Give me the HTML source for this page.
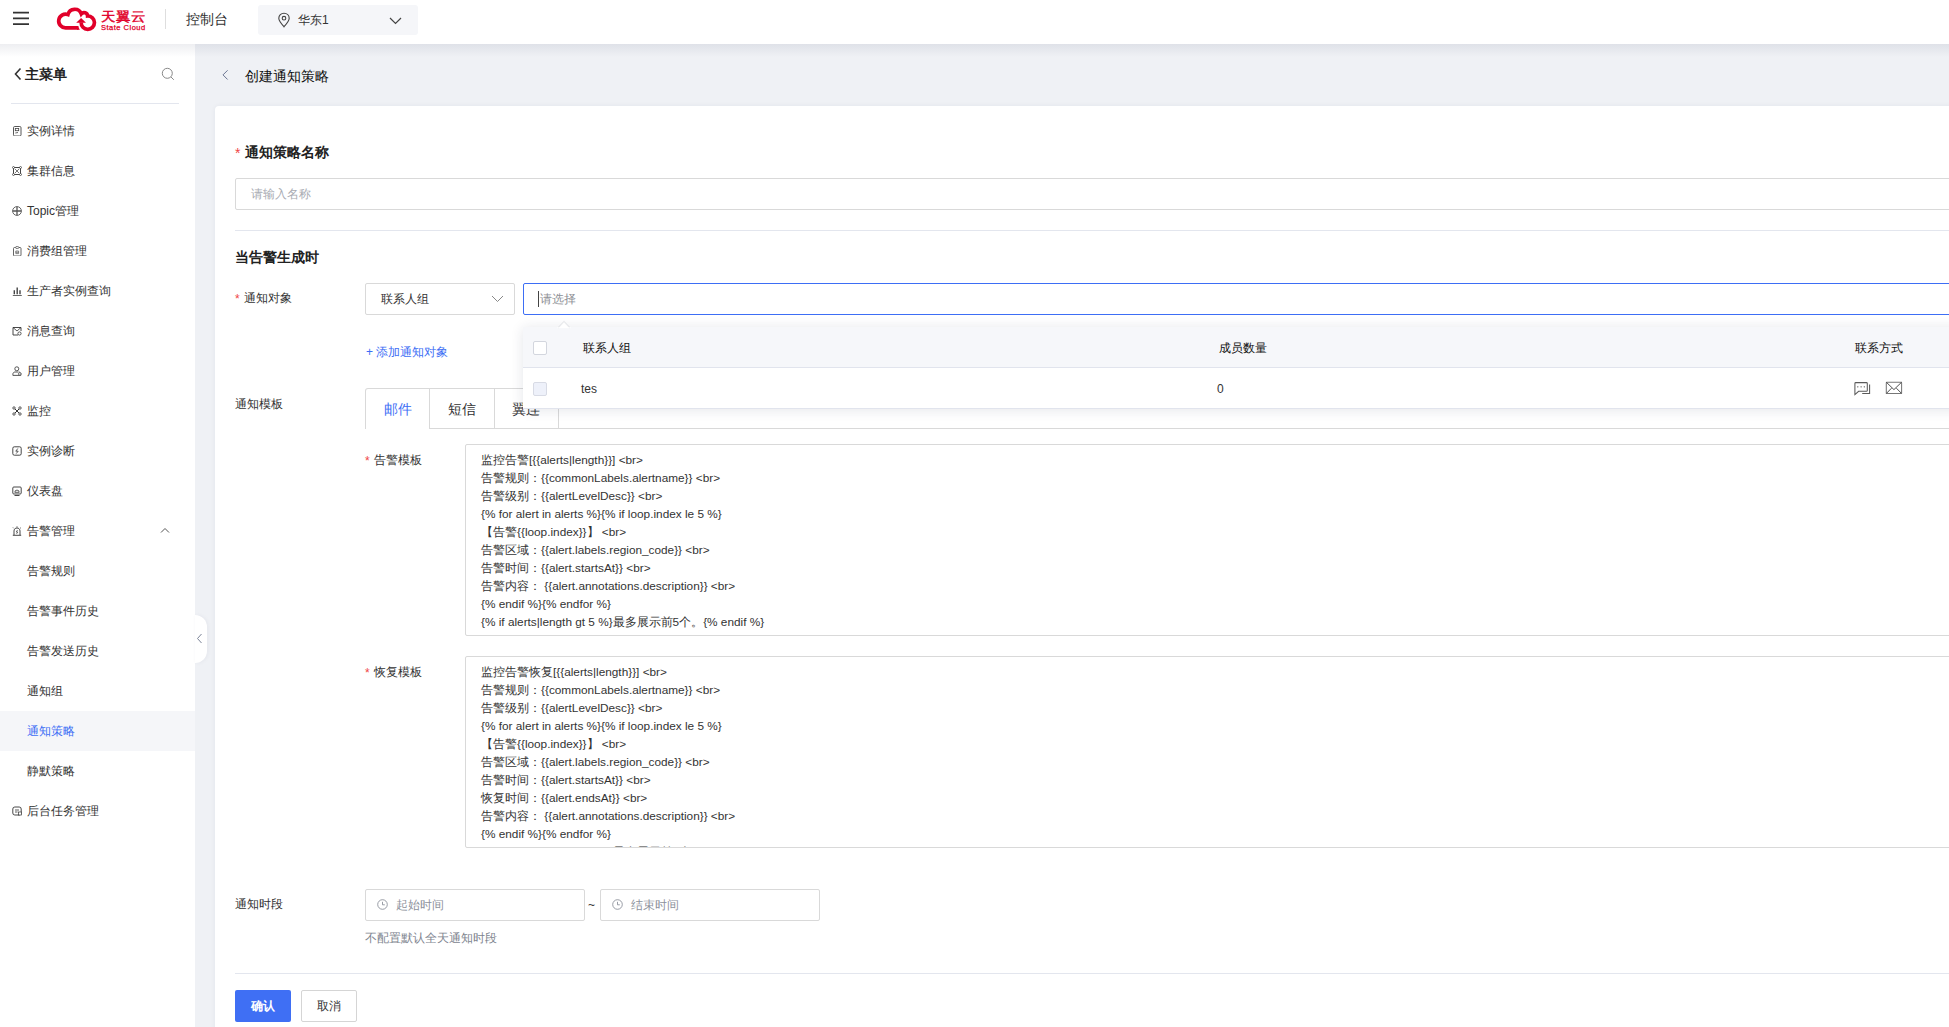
<!DOCTYPE html>
<html><head><meta charset="utf-8">
<style>
*{box-sizing:border-box;margin:0;padding:0}
html,body{width:1949px;height:1027px;overflow:hidden;background:#eff1f5;font-family:"Liberation Sans",sans-serif;color:#222;font-size:12px}
.abs{position:absolute}
.t{position:absolute;white-space:nowrap;line-height:1}
#hdr{position:absolute;left:0;top:0;width:1949px;height:44px;background:#fff;z-index:5}
#hshadow{position:absolute;left:0;top:44px;width:1949px;height:13px;background:linear-gradient(rgba(20,30,70,0.075),rgba(20,30,70,0));z-index:4}
#side{position:absolute;left:0;top:0;width:195px;height:1027px;background:#fff;z-index:3}
#card{position:absolute;left:215px;top:106px;width:1760px;height:950px;background:#fff;border-radius:4px;box-shadow:0 0 5px rgba(40,50,80,0.06)}
.mi{position:absolute;left:0;width:195px;height:40px}
.mi .ic{position:absolute;left:12px;top:16px;width:10px;height:10px}
.mi .tx{position:absolute;left:27px;top:15px;font-size:12px;line-height:12px;color:#333;white-space:nowrap}
.inp{position:absolute;border:1px solid #d9d9d9;border-radius:2px;background:#fff}
.lbl{position:absolute;font-size:12px;line-height:12px;color:#333;white-space:nowrap}
.req{color:#f04545}
.ta{position:absolute;border:1px solid #d9d9d9;border-radius:2px;background:#fff;overflow:hidden}
.ta .ln{position:absolute;left:15px;font-size:11.8px;line-height:12px;color:#333;white-space:nowrap}
</style></head>
<body>
<!-- HEADER -->
<div id="hdr">
  <svg class="abs" style="left:12px;top:8px" width="18" height="20" viewBox="0 0 18 20"><path d="M1 4.7 H17 M1 10.4 H17 M1 16.1 H17" stroke="#333" stroke-width="1.7"/></svg>
  <svg class="abs" style="left:52px;top:3px" width="50" height="32" viewBox="0 0 50 32">
    <path d="M26.5 24.9 H13.8 A6.9 6.9 0 1 1 15.9 11.5 A7.03 7.03 0 0 1 29.3 10.9 A3.55 3.55 0 0 1 35.6 13.0 A6.65 6.65 0 1 1 29.15 19.4" fill="none" stroke="#e1002a" stroke-width="3.7"/>
    <path d="M29.1 14.9 L34 19.7 L24.2 19.7 Z" fill="#e1002a"/><path d="M25 23.05 H25.6 L27.9 26.75 H25 Z" fill="#e1002a"/>
  </svg>
  <div class="t" style="left:101px;top:10px;font-size:14.6px;font-weight:normal;color:#e1002a;-webkit-text-stroke:0.45px #e1002a;transform:scaleY(0.9);transform-origin:0 0">天翼云</div>
  <div class="t" style="left:101px;top:24px;font-size:7.5px;font-weight:normal;color:#e1002a;letter-spacing:0.5px;-webkit-text-stroke:0.25px #e1002a">State Cloud</div>
  <div class="abs" style="left:165px;top:9px;width:1px;height:20px;background:#dedede"></div>
  <div class="t" style="left:186px;top:12px;font-size:14px;color:#333">控制台</div>
  <div class="abs" style="left:258px;top:5px;width:160px;height:30px;background:#f5f6f9;border-radius:3px"></div>
  <svg class="abs" style="left:277px;top:12px" width="14" height="16" viewBox="0 0 14 16">
    <path d="M7 14.8 C4.5 12 1.8 9 1.8 6.3 C1.8 3.3 4.1 1.2 7 1.2 C9.9 1.2 12.2 3.3 12.2 6.3 C12.2 9 9.5 12 7 14.8 Z" fill="none" stroke="#444" stroke-width="1.1"/>
    <circle cx="7" cy="6.2" r="1.8" fill="none" stroke="#444" stroke-width="1.1"/>
  </svg>
  <div class="t" style="left:298px;top:14px;font-size:12px;color:#333">华东1</div>
  <svg class="abs" style="left:389px;top:17px" width="13" height="8" viewBox="0 0 13 8">
    <path d="M1 1 L6.5 6.5 L12 1" fill="none" stroke="#444" stroke-width="1.2"/>
  </svg>
</div>
<div id="hshadow"></div>

<!-- SIDEBAR -->
<div id="side">
  <svg class="abs" style="left:13px;top:67px" width="10" height="14" viewBox="0 0 10 14"><path d="M7.5 1.5 L2.5 7 L7.5 12.5" fill="none" stroke="#333" stroke-width="1.6"/></svg>
  <div class="t" style="left:25px;top:67px;font-size:14px;font-weight:bold;color:#222">主菜单</div>
  <svg class="abs" style="left:161px;top:67px" width="14" height="14" viewBox="0 0 14 14"><circle cx="6.3" cy="6.3" r="5" fill="none" stroke="#888" stroke-width="1"/><path d="M10 10 L12.8 12.8" stroke="#888" stroke-width="1"/></svg>
  <div class="abs" style="left:11px;top:103px;width:168px;height:1px;background:#e3e6ee"></div>
  <div class="mi" style="top:110px"><svg class="ic" width="10" height="10" viewBox="0 0 10 10"><rect x="1.5" y="0.5" width="7.5" height="9.5" rx="1.2" fill="none" stroke="#444" stroke-width="0.9"/><rect x="3.3" y="2.5" width="3.4" height="2.2" fill="none" stroke="#444" stroke-width="0.8"/><path d="M3.3 7 L6 6.5" stroke="#444" stroke-width="0.8"/></svg><div class="tx">实例详情</div></div>
  <div class="mi" style="top:150px"><svg class="ic" width="10" height="10" viewBox="0 0 10 10"><rect x="1.5" y="1.5" width="7" height="7" fill="none" stroke="#333" stroke-width="0.9"/><circle cx="1.5" cy="1.5" r="1" fill="#fff" stroke="#333" stroke-width="0.7"/><circle cx="8.5" cy="1.5" r="1" fill="#fff" stroke="#333" stroke-width="0.7"/><circle cx="1.5" cy="8.5" r="1" fill="#fff" stroke="#333" stroke-width="0.7"/><circle cx="8.5" cy="8.5" r="1" fill="#fff" stroke="#333" stroke-width="0.7"/><path d="M3 3 L7 7 M7 3 L3 7" stroke="#555" stroke-width="0.8"/></svg><div class="tx">集群信息</div></div>
  <div class="mi" style="top:190px"><svg class="ic" width="10" height="10" viewBox="0 0 10 10"><circle cx="5" cy="5" r="4.4" fill="none" stroke="#555" stroke-width="0.9"/><path d="M5 0.8 V9.2 M0.8 5 H9.2" stroke="#555" stroke-width="1.3"/></svg><div class="tx">Topic管理</div></div>
  <div class="mi" style="top:230px"><svg class="ic" width="10" height="10" viewBox="0 0 10 10"><rect x="1.5" y="1.5" width="7.5" height="8.5" rx="1" fill="none" stroke="#555" stroke-width="0.9"/><ellipse cx="5.2" cy="1.5" rx="1.8" ry="1" fill="#fff" stroke="#555" stroke-width="0.8"/><path d="M3.8 5 H6.6 V7.6 H3.8 Z M3.8 6.3 H6.6" fill="none" stroke="#555" stroke-width="0.7"/></svg><div class="tx">消费组管理</div></div>
  <div class="mi" style="top:270px"><svg class="ic" width="10" height="10" viewBox="0 0 10 10"><path d="M0.8 9.6 H9.8" stroke="#444" stroke-width="0.9"/><path d="M2.3 8.3 V4.3 M5.2 8.3 V1.6 M8 8.3 V4.3" stroke="#444" stroke-width="1.4"/></svg><div class="tx">生产者实例查询</div></div>
  <div class="mi" style="top:310px"><svg class="ic" width="10" height="10" viewBox="0 0 10 10"><path d="M6 9 H1 V1.5 H9 V5" fill="none" stroke="#333" stroke-width="0.9"/><path d="M1 1.5 L5 5 L9 1.5" fill="none" stroke="#333" stroke-width="0.8"/><circle cx="7.5" cy="7.5" r="1.6" fill="none" stroke="#333" stroke-width="0.8"/></svg><div class="tx">消息查询</div></div>
  <div class="mi" style="top:350px"><svg class="ic" width="10" height="10" viewBox="0 0 10 10"><circle cx="4.8" cy="2.8" r="2" fill="none" stroke="#444" stroke-width="0.9"/><path d="M6.3 6 H3 C1.8 6 0.9 6.9 0.9 8.1 V9.4 H8.8 V8.1 C8.8 6.9 7.9 6 6.7 6" fill="none" stroke="#444" stroke-width="0.9"/><circle cx="7.8" cy="7.9" r="1.3" fill="#fff" stroke="#444" stroke-width="0.8"/></svg><div class="tx">用户管理</div></div>
  <div class="mi" style="top:390px"><svg class="ic" width="10" height="10" viewBox="0 0 10 10"><circle cx="2" cy="2" r="1.2" fill="none" stroke="#333" stroke-width="0.8"/><circle cx="8" cy="2" r="1.2" fill="none" stroke="#333" stroke-width="0.8"/><circle cx="2" cy="8" r="1.2" fill="none" stroke="#333" stroke-width="0.8"/><circle cx="8" cy="8" r="1.2" fill="none" stroke="#333" stroke-width="0.8"/><path d="M3 3 L7 7 M7 3 L3 7" stroke="#333" stroke-width="1"/></svg><div class="tx">监控</div></div>
  <div class="mi" style="top:430px"><svg class="ic" width="10" height="10" viewBox="0 0 10 10"><rect x="0.8" y="0.8" width="8.4" height="8.4" rx="1.5" fill="none" stroke="#333" stroke-width="0.9"/><path d="M5.8 2.5 L3.8 5.2 H6.2 L4.2 7.6" fill="none" stroke="#333" stroke-width="0.8"/></svg><div class="tx">实例诊断</div></div>
  <div class="mi" style="top:470px"><svg class="ic" width="10" height="10" viewBox="0 0 10 10"><rect x="0.8" y="1" width="8.4" height="7" rx="1" fill="none" stroke="#333" stroke-width="0.9"/><path d="M2.8 6.3 A2.2 2.2 0 0 1 7.2 6.3 Z" fill="none" stroke="#333" stroke-width="0.8"/><path d="M2.5 9.5 H7.5" stroke="#333" stroke-width="0.9"/></svg><div class="tx">仪表盘</div></div>
  <div class="mi" style="top:510px"><svg class="ic" width="10" height="10" viewBox="0 0 10 10"><path d="M2 9 V5 C2 3.2 3.3 2 5 2 C6.7 2 8 3.2 8 5 V9" fill="none" stroke="#333" stroke-width="0.9"/><path d="M0.8 9.3 H9.2" stroke="#333" stroke-width="0.9"/><path d="M5 0.3 V1.5 M1 1.5 L1.8 2.3 M9 1.5 L8.2 2.3" stroke="#333" stroke-width="0.8"/><path d="M5.5 4 L4.3 6 H5.7 L4.6 7.8" fill="none" stroke="#333" stroke-width="0.7"/></svg><div class="tx">告警管理</div><svg class="abs" style="left:160px;top:17px" width="10" height="6" viewBox="0 0 10 6"><path d="M1 5.5 L5 1.5 L9 5.5" fill="none" stroke="#555" stroke-width="1"/></svg></div>
  <div class="mi" style="top:550px"><div class="tx">告警规则</div></div>
  <div class="mi" style="top:590px"><div class="tx">告警事件历史</div></div>
  <div class="mi" style="top:630px"><div class="tx">告警发送历史</div></div>
  <div class="mi" style="top:670px"><div class="tx">通知组</div></div>
  <div class="mi" style="top:710px"><div class="abs" style="left:0;top:1px;width:195px;height:40px;background:#f5f6f9"></div><div class="tx" style="color:#3d6ef5">通知策略</div></div>
  <div class="mi" style="top:750px"><div class="tx">静默策略</div></div>
  <div class="mi" style="top:790px"><svg class="ic" width="10" height="10" viewBox="0 0 10 10"><rect x="0.8" y="1" width="8.4" height="8" rx="2" fill="none" stroke="#333" stroke-width="0.9"/><path d="M3 4 H7 M3 6 H5.5" stroke="#333" stroke-width="0.8"/><rect x="6.5" y="6" width="3" height="3" fill="#fff" stroke="#333" stroke-width="0.7"/></svg><div class="tx">后台任务管理</div></div>
</div>
<div class="abs" style="left:195px;top:615px;width:12px;height:48px;background:#fff;border-radius:0 12px 12px 0;box-shadow:1px 0 4px rgba(30,40,70,0.05);z-index:3"></div>
<svg class="abs" style="left:196px;top:633px;z-index:3" width="7" height="11" viewBox="0 0 7 11"><path d="M5.5 1 L1.5 5.5 L5.5 10" fill="none" stroke="#7d8599" stroke-width="1"/></svg>

<!-- MAIN -->
<svg class="abs" style="left:221px;top:69px" width="9" height="12" viewBox="0 0 9 12"><path d="M6.6 1.3 L2 5.9 L6.6 10.5" fill="none" stroke="#6b7592" stroke-width="1"/></svg>
<div class="t" style="left:245px;top:69px;font-size:14px;font-weight:500;color:#111">创建通知策略</div>
<div id="card"></div>

<!-- FORM -->
<div class="t" style="left:235px;top:146px;font-size:14px;color:#f04545">*</div>
<div class="t" style="left:245px;top:145px;font-size:14px;font-weight:bold;color:#222">通知策略名称</div>
<div class="inp" style="left:235px;top:178px;width:1750px;height:32px"></div>
<div class="t" style="left:251px;top:188px;font-size:12px;color:#a8abb3">请输入名称</div>
<div class="abs" style="left:235px;top:230px;width:1750px;height:1px;background:#e3e6ee"></div>
<div class="t" style="left:235px;top:250px;font-size:14px;font-weight:bold;color:#222">当告警生成时</div>

<div class="t" style="left:235px;top:293px;font-size:12px;color:#f04545">*</div>
<div class="t" style="left:244px;top:292px;font-size:12px;color:#333">通知对象</div>
<div class="inp" style="left:365px;top:283px;width:150px;height:32px"></div>
<div class="t" style="left:381px;top:293px;font-size:12px;color:#333">联系人组</div>
<svg class="abs" style="left:491px;top:295px" width="13" height="8" viewBox="0 0 13 8"><path d="M1 1 L6.5 6.5 L12 1" fill="none" stroke="#888" stroke-width="1"/></svg>
<div class="inp" style="left:523px;top:283px;width:1500px;height:32px;border-color:#3d6ef5"></div>
<div class="abs" style="left:538px;top:291px;width:1px;height:16px;background:#444"></div>
<div class="t" style="left:540px;top:293px;font-size:12px;color:#8e9096">请选择</div>

<div class="t" style="left:366px;top:346px;font-size:12px;color:#3d6ef5">+ 添加通知对象</div>
<div class="t" style="left:235px;top:398px;font-size:12px;color:#333">通知模板</div>

<!-- tabs -->
<div class="abs" style="left:365px;top:388px;width:65px;height:41px;border:1px solid #d9d9d9;border-bottom:none;border-radius:3px 0 0 0"></div>
<div class="abs" style="left:429px;top:388px;width:66px;height:41px;border:1px solid #d9d9d9;border-left:none"></div>
<div class="abs" style="left:494px;top:388px;width:65px;height:41px;border:1px solid #d9d9d9;border-left:none"></div>
<div class="abs" style="left:558px;top:428px;width:1400px;height:1px;background:#d9d9d9"></div>
<div class="t" style="left:384px;top:402px;font-size:14px;color:#3d6ef5">邮件</div>
<div class="t" style="left:448px;top:402px;font-size:14px;color:#333">短信</div>
<div class="t" style="left:512px;top:402px;font-size:14px;color:#333">翼连</div>

<div class="t" style="left:365px;top:455px;font-size:12px;color:#f04545">*</div>
<div class="t" style="left:374px;top:454px;font-size:12px;color:#333">告警模板</div>
<div class="ta" style="left:465px;top:444px;width:1500px;height:192px"><div class="ln" style="top:9px">监控告警[{{alerts|length}}] &lt;br&gt;</div><div class="ln" style="top:27px">告警规则：{{commonLabels.alertname}} &lt;br&gt;</div><div class="ln" style="top:45px">告警级别：{{alertLevelDesc}} &lt;br&gt;</div><div class="ln" style="top:63px">{% for alert in alerts %}{% if loop.index le 5 %}</div><div class="ln" style="top:81px">【告警{{loop.index}}】 &lt;br&gt;</div><div class="ln" style="top:99px">告警区域：{{alert.labels.region_code}} &lt;br&gt;</div><div class="ln" style="top:117px">告警时间：{{alert.startsAt}} &lt;br&gt;</div><div class="ln" style="top:135px">告警内容： {{alert.annotations.description}} &lt;br&gt;</div><div class="ln" style="top:153px">{% endif %}{% endfor %}</div><div class="ln" style="top:171px">{% if alerts|length gt 5 %}最多展示前5个。{% endif %}</div></div>
<div class="t" style="left:365px;top:667px;font-size:12px;color:#f04545">*</div>
<div class="t" style="left:374px;top:666px;font-size:12px;color:#333">恢复模板</div>
<div class="ta" style="left:465px;top:656px;width:1500px;height:192px"><div class="ln" style="top:9px">监控告警恢复[{{alerts|length}}] &lt;br&gt;</div><div class="ln" style="top:27px">告警规则：{{commonLabels.alertname}} &lt;br&gt;</div><div class="ln" style="top:45px">告警级别：{{alertLevelDesc}} &lt;br&gt;</div><div class="ln" style="top:63px">{% for alert in alerts %}{% if loop.index le 5 %}</div><div class="ln" style="top:81px">【告警{{loop.index}}】 &lt;br&gt;</div><div class="ln" style="top:99px">告警区域：{{alert.labels.region_code}} &lt;br&gt;</div><div class="ln" style="top:117px">告警时间：{{alert.startsAt}} &lt;br&gt;</div><div class="ln" style="top:135px">恢复时间：{{alert.endsAt}} &lt;br&gt;</div><div class="ln" style="top:153px">告警内容： {{alert.annotations.description}} &lt;br&gt;</div><div class="ln" style="top:171px">{% endif %}{% endfor %}</div><div class="ln" style="top:189px">{% if alerts|length gt 5 %}最多展示前5个。{% endif %}</div></div>

<div class="t" style="left:235px;top:898px;font-size:12px;color:#333">通知时段</div>
<div class="inp" style="left:365px;top:889px;width:220px;height:32px"></div>
<svg class="abs" style="left:377px;top:899px" width="11" height="11" viewBox="0 0 11 11"><circle cx="5.5" cy="5.5" r="4.8" fill="none" stroke="#8d929c" stroke-width="0.9"/><path d="M5.5 2.8 V5.8 H7.8" fill="none" stroke="#8d929c" stroke-width="0.9"/></svg>
<div class="t" style="left:396px;top:899px;font-size:12px;color:#8d929c">起始时间</div>
<div class="t" style="left:588px;top:899px;font-size:12px;color:#333">~</div>
<div class="inp" style="left:600px;top:889px;width:220px;height:32px"></div>
<svg class="abs" style="left:612px;top:899px" width="11" height="11" viewBox="0 0 11 11"><circle cx="5.5" cy="5.5" r="4.8" fill="none" stroke="#8d929c" stroke-width="0.9"/><path d="M5.5 2.8 V5.8 H7.8" fill="none" stroke="#8d929c" stroke-width="0.9"/></svg>
<div class="t" style="left:631px;top:899px;font-size:12px;color:#8d929c">结束时间</div>
<div class="t" style="left:365px;top:932px;font-size:12px;color:#80858f">不配置默认全天通知时段</div>
<div class="abs" style="left:235px;top:973px;width:1750px;height:1px;background:#e3e6ee"></div>
<div class="abs" style="left:235px;top:990px;width:56px;height:32px;background:#3f6ff4;border-radius:2px"></div>
<div class="t" style="left:251px;top:1000px;font-size:12px;font-weight:bold;color:#fff">确认</div>
<div class="inp" style="left:301px;top:990px;width:56px;height:32px;border-color:#d5d5d5"></div>
<div class="t" style="left:317px;top:1000px;font-size:12px;color:#333">取消</div>

<!-- dropdown popup -->
<div class="abs" style="left:523px;top:327px;width:1500px;height:82px;background:#fff;box-shadow:0 1px 12px rgba(30,40,70,0.12);z-index:2">
  <div class="abs" style="left:0;top:0;width:1500px;height:41px;background:#f6f7fa;border-bottom:1px solid #e1e4ed"></div>
  <div class="abs" style="left:10px;top:14px;width:14px;height:14px;border:1px solid #d3d6de;border-radius:2px;background:#fff"></div>
  <div class="t" style="left:60px;top:15px;font-size:12px;font-weight:500;color:#111">联系人组</div>
  <div class="t" style="left:696px;top:15px;font-size:12px;font-weight:500;color:#111">成员数量</div>
  <div class="t" style="left:1332px;top:15px;font-size:12px;font-weight:500;color:#111">联系方式</div>
  <div class="abs" style="left:0;top:81px;width:1500px;height:1px;background:#e1e4ed"></div>
  <div class="abs" style="left:10px;top:55px;width:14px;height:14px;border:1px solid #d8dbe5;border-radius:2px;background:#eef1fa"></div>
  <div class="t" style="left:58px;top:56px;font-size:12px;color:#333">tes</div>
  <div class="t" style="left:694px;top:56px;font-size:12px;color:#333">0</div>
  <svg class="abs" style="left:1331px;top:54px" width="17" height="15" viewBox="0 0 17 15"><path d="M0.9 13.6 V2.5 Q0.9 1.6 1.8 1.6 H12.4 Q13.3 1.6 13.3 2.5 V9.4 Q13.3 10.3 12.4 10.3 H4.6 Z" fill="none" stroke="#5a5a5a" stroke-width="1.05"/><circle cx="3.8" cy="5.8" r="0.65" fill="#444"/><circle cx="7.1" cy="5.8" r="0.65" fill="#444"/><circle cx="10.3" cy="5.8" r="0.65" fill="#444"/><path d="M15.6 3.5 V12.5 H8.2" fill="none" stroke="#5a5a5a" stroke-width="1.05"/></svg>
  <svg class="abs" style="left:1362px;top:54px" width="18" height="14" viewBox="0 0 18 14"><rect x="1.3" y="1.2" width="15.3" height="11.3" rx="0.8" fill="none" stroke="#777" stroke-width="1.05"/><path d="M1.3 1.2 L8.95 8.6 L16.6 1.2 M1.3 12.5 L6.5 7.2 M16.6 12.5 L11.4 7.2" fill="none" stroke="#444" stroke-width="0.95"/></svg>
</div>
<svg class="abs" style="left:556px;top:319px;z-index:2" width="16" height="10" viewBox="0 0 16 10"><path d="M2 9 L8 2.5 L14 9" fill="#fff" stroke="rgba(30,40,70,0.08)" stroke-width="1.2"/><rect x="1" y="8.4" width="14" height="0.8" fill="#fff"/></svg>

</body></html>
